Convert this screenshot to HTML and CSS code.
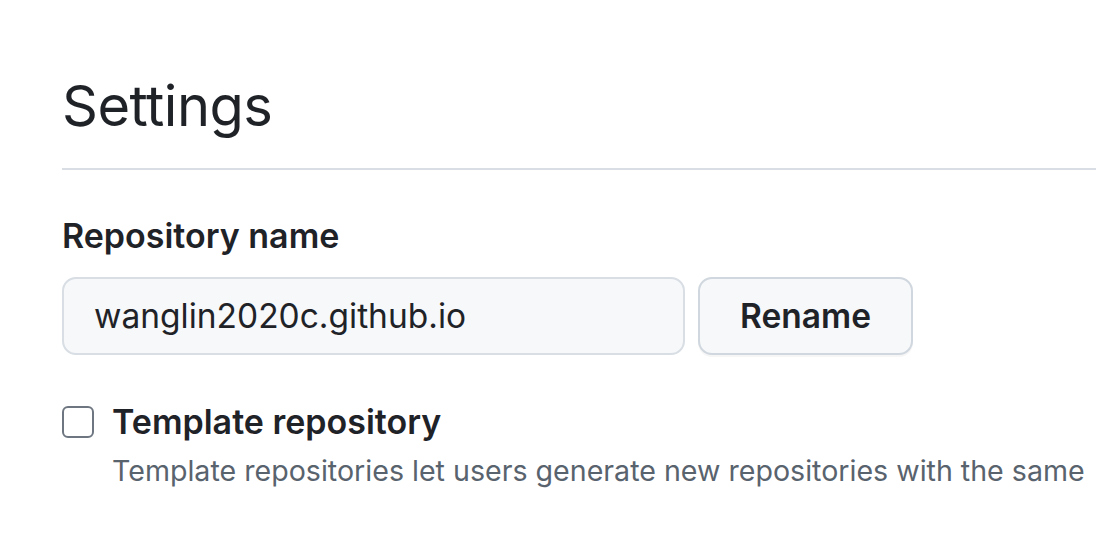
FILE: index.html
```html
<!DOCTYPE html>
<html>
<head>
<meta charset="utf-8">
<link rel="stylesheet" href="styles.css">
</head>
<body>
<main class="page">
  <h2 class="title">Settings</h2>
  <div class="divider"></div>
  <label class="label" for="repo">Repository name</label>
  <div class="rename-row">
    <input id="repo" class="field" type="text" value="wanglin2020c.github.io">
    <button class="btn" type="button">Rename</button>
  </div>
  <div class="check-row">
    <span class="checkbox"></span>
    <div class="check-text">
      <div class="check-label">Template repository</div>
      <div class="check-note">Template repositories let users generate new repositories with the same</div>
    </div>
  </div>
</main>
</body>
</html>
```

FILE: styles.css
```css
html, body {
  margin: 0;
  padding: 0;
  background: #ffffff;
}
body {
  font-family: Inter, "Noto Sans", "Liberation Sans", sans-serif;
  color: #1f2328;
  overflow: hidden;
  width: 1096px;
  height: 542px;
}
.page {
  padding: 66px 0 0 62px;
  display: flex;
  flex-direction: column;
}
.title {
  margin: 0;
  font-size: 56px;
  font-weight: 400;
  line-height: 80px;
  letter-spacing: -0.5px;
}
.divider {
  margin-top: 22px;
  height: 2px;
  background: #d8dee4;
}
.label {
  margin-top: 46px;
  font-size: 34px;
  font-weight: 600;
  line-height: 40px;
}
.rename-row {
  margin-top: 21px;
  display: flex;
  gap: 13px;
}
.field {
  box-sizing: border-box;
  width: 623px;
  height: 78px;
  padding: 0 30px;
  font: inherit;
  font-size: 33.5px;
  color: #1f2328;
  background: #f6f8fa;
  border: 2px solid #d8dee4;
  border-radius: 14px;
  outline: none;
}
.btn {
  box-sizing: border-box;
  width: 215px;
  height: 78px;
  font: inherit;
  font-size: 33.5px;
  font-weight: 600;
  color: #1f2328;
  background: #f6f8fa;
  border: 2px solid #d0d7de;
  border-radius: 14px;
  box-shadow: 0 2px 0 rgba(31, 35, 40, 0.04);
}
.check-row {
  margin-top: 50px;
  display: flex;
  gap: 18px;
  align-items: flex-start;
}
.checkbox {
  box-sizing: border-box;
  flex: none;
  width: 32px;
  height: 32px;
  margin-top: 1px;
  border: 2px solid #6e7781;
  border-radius: 6px;
  background: #fff;
}
.check-text {
  display: flex;
  flex-direction: column;
}
.check-label {
  font-size: 34px;
  font-weight: 600;
  line-height: 34px;
}
.check-note {
  margin-top: 12px;
  font-size: 28.6px;
  line-height: 40px;
  color: #59636e;
  white-space: nowrap;
}
```
